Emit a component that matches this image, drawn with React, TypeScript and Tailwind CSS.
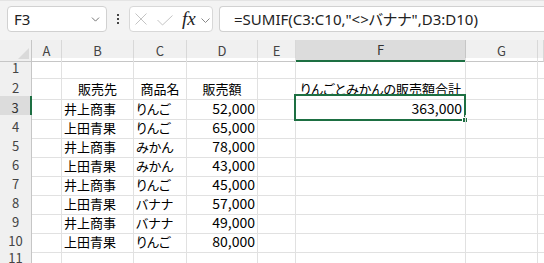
import { ChevronDown } from "lucide-react"

const cols = ["A", "B", "C", "D", "E", "F", "G", ""]

const rows: { b?: string; c?: string; d?: string; f?: string; head?: boolean }[] = [
  {},
  { b: "販売先", c: "商品名", d: "販売額", f: "りんごとみかんの販売額合計", head: true },
  { b: "井上商事", c: "りんご", d: "52,000", f: "363,000" },
  { b: "上田青果", c: "りんご", d: "65,000" },
  { b: "井上商事", c: "みかん", d: "78,000" },
  { b: "上田青果", c: "みかん", d: "43,000" },
  { b: "井上商事", c: "りんご", d: "45,000" },
  { b: "上田青果", c: "バナナ", d: "57,000" },
  { b: "井上商事", c: "バナナ", d: "49,000" },
  { b: "上田青果", c: "りんご", d: "80,000" },
  {},
]

const grid = "grid grid-cols-[32px_30px_72px_53px_71px_38px_170px_72px_1fr]"
const font = { fontFamily: '"Noto Sans CJK JP", "Noto Sans", sans-serif' }
const cell = "border-r border-b border-[#e1e1e1] flex items-center pt-[2px] whitespace-nowrap"

export default function App() {
  return (
    <div
      className="w-[544px] h-[263px] overflow-hidden bg-white text-[14px] text-black [font-feature-settings:'palt']"
      style={font}
    >
      {/* Formula bar */}
      <div className="h-[40px] bg-[#f3f3f3] border-t border-[#e4e4e4] flex items-start pt-[5px] pl-[7px]">
        <div className="w-[100px] h-[26px] bg-white border border-[#d1d1d1] rounded-[4px] flex items-center pl-[6px] pr-[4px]">
          <span className="text-[15px] text-[#222] flex-1" style={{ fontFamily: '"Noto Sans", sans-serif' }}>F3</span>
          <ChevronDown className="w-[13px] h-[13px] text-[#555]" strokeWidth={1.5} />
        </div>
        <div className="w-[22px] h-[26px] flex flex-col items-center justify-center gap-[2px]">
          <span className="w-[2px] h-[2px] bg-[#444]" />
          <span className="w-[2px] h-[2px] bg-[#444]" />
          <span className="w-[2px] h-[2px] bg-[#444]" />
        </div>
        <div className="w-[84px] h-[26px] bg-white border border-[#d8d8d8] rounded-[4px] flex items-center pl-[5px]">
          <svg width="12" height="12" viewBox="0 0 12 12" className="text-[#c4c4c4]">
            <path d="M0.5 0.5 L11.5 11.5 M11.5 0.5 L0.5 11.5" stroke="currentColor" strokeWidth="1" fill="none" />
          </svg>
          <svg width="16" height="11" viewBox="0 0 16 11" className="ml-[10px] mt-[3px] text-[#c4c4c4]">
            <path d="M0.5 5 L5.5 10 L15.5 0.5" stroke="currentColor" strokeWidth="1" fill="none" />
          </svg>
          <span
            className="italic text-[19px] text-[#222] leading-none ml-[9px] -mt-[2px]"
            style={{ fontFamily: '"Liberation Serif", serif' }}
          >
            fx
          </span>
          <svg width="9" height="5" viewBox="0 0 9 5" className="ml-[5px] mt-[2px] text-[#888]">
            <path d="M0.5 0.5 L4.5 4.5 L8.5 0.5" stroke="currentColor" strokeWidth="1" fill="none" />
          </svg>
        </div>
        <div className="flex-1 ml-[6px] h-[26px] bg-white border border-[#d1d1d1] border-r-0 rounded-l-[4px] flex items-center pl-[14px]">
          <span className="text-[15px] text-[#222] whitespace-nowrap" style={{ fontFamily: '"Noto Sans", "Noto Sans CJK JP", sans-serif' }}>
            =SUMIF(C3:C10,"&lt;&gt;バナナ",D3:D10)
          </span>
        </div>
      </div>

      {/* Column headers */}
      <div className={`${grid} h-[18px] bg-[#f0f0f0]`}>
        <div className="relative border-r border-b border-[#c6c6c6]">
          <div className="absolute right-[2px] bottom-[2px] w-0 h-0 border-l-[11px] border-l-transparent border-b-[11px] border-b-[#dadada]" />
        </div>
        {cols.map((c, i) => (
          <div
            key={i}
            className={
              c === "F"
                ? "flex items-center justify-center border-r border-[#c6c6c6] bg-[#dcdcdc] border-b-2 border-b-[#1d6f42] text-[#333] text-[13px]"
                : "flex items-center justify-center border-r border-b border-[#d8d8d8] border-b-[#c6c6c6] text-[#444] text-[13px]"
            }
          >
            {c}
          </div>
        ))}
      </div>

      {/* Rows */}
      {rows.map((r, i) => (
        <div key={i} className={`${grid} h-[19px]`}>
          <div
            className={
              i === 2
                ? "flex items-center justify-center bg-[#dcdcdc] border-r-2 border-r-[#1d6f42] border-b border-b-[#d8d8d8] text-[#333] text-[13px]"
                : "flex items-center justify-center bg-[#f0f0f0] border-r border-r-[#c6c6c6] border-b border-b-[#d8d8d8] text-[#444] text-[13px]"
            }
          >
            {i + 1}
          </div>
          <div className="border-r border-b border-[#e1e1e1]" />
          <div className={`${cell} text-[13px] ${r.head ? "justify-center" : "pl-[2px]"}`}>{r.b}</div>
          <div className={`${cell} text-[13px] ${r.head ? "justify-center" : "pl-[2px]"}`}>{r.c}</div>
          <div className={`${cell} ${r.head ? "justify-center text-[13px]" : "justify-end pr-[2px]"}`}>{r.d}</div>
          <div className="border-r border-b border-[#e1e1e1]" />
          <div className={`relative ${cell} ${r.head ? "justify-center text-[13px]" : "justify-end pr-[3px]"}`}>
            {r.f}
            {i === 2 && (
              <>
                <div className="absolute -left-[2px] -top-[2px] -right-[1px] -bottom-[2px] border-2 border-[#1d6f42] pointer-events-none" />
                <div className="absolute -right-[3px] -bottom-[4px] w-[6px] h-[6px] bg-[#1d6f42] border border-white" />
              </>
            )}
          </div>
          <div className="border-r border-b border-[#e1e1e1]" />
          <div className="border-b border-[#e1e1e1]" />
        </div>
      ))}
    </div>
  )
}
